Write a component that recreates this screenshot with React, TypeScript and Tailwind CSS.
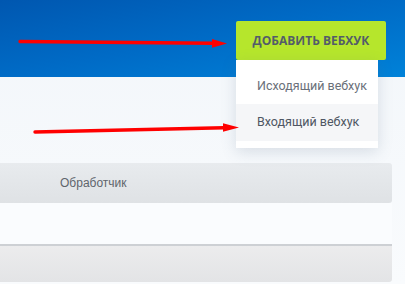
export default function App() {
  return (
    <div className="relative w-[405px] h-[284px] overflow-hidden bg-gradient-to-b from-[#f2f6fa] to-[#f9fbfd] font-['Liberation_Sans',Arial,sans-serif]">
      {/* Header */}
      <div className="h-[77px] bg-gradient-to-br from-[#0057b0] via-[#006bc6] to-[#0082d9] flex justify-end pt-[21px] pr-[19px]">
        <button className="w-[150px] h-[39px] rounded-[2px] bg-[#b6e62c] text-[#535c69] text-[12px] font-bold font-['Open_Sans',sans-serif]">
          ДОБАВИТЬ ВЕБХУК
        </button>
      </div>

      {/* Table */}
      <div className="mt-[86px] w-[392px]">
        <div className="h-[40px] rounded-r-[3px] bg-gradient-to-b from-[#e8ebee] to-[#dfe2e5] flex items-center pl-[60px] text-[12px] text-[#5f656c]">
          Обработчик
        </div>
        <div className="h-[41px] bg-[#fafcfe]"></div>
        <div className="h-[38px] rounded-br-[3px] border-t-2 border-[#cdd0d4] bg-gradient-to-b from-[#ececed] to-[#e3e4e6]"></div>
      </div>

      {/* Dropdown menu */}
      <div className="absolute left-[236px] top-[60px] w-[142px] bg-white pt-[9px] pb-[7px] font-['Roboto',sans-serif] shadow-[0_4px_14px_rgba(80,100,130,0.18)]">
        <div className="h-[35px] flex items-center pl-[21px] text-[12.5px] text-[#6a7079]">Исходящий вебхук</div>
        <div className="h-[37px] flex items-center pl-[21px] text-[12.5px] text-[#4f5663] bg-[#f5f6f8]">Входящий вебхук</div>
      </div>

      {/* Annotation arrows */}
      <svg className="absolute inset-0 pointer-events-none" width="405" height="284" viewBox="0 0 405 284">
        <path d="M20 41.5 L213 43.3" stroke="#ff0000" strokeWidth="3.4" strokeLinecap="round" />
        <polygon points="212,39 227,43.4 212,47.7" fill="#ff0000" />
        <path d="M35 132 L224 127.8" stroke="#ff0000" strokeWidth="3.4" strokeLinecap="round" />
        <polygon points="223,123.3 239,127.5 223,131.7" fill="#ff0000" />
      </svg>
    </div>
  );
}
